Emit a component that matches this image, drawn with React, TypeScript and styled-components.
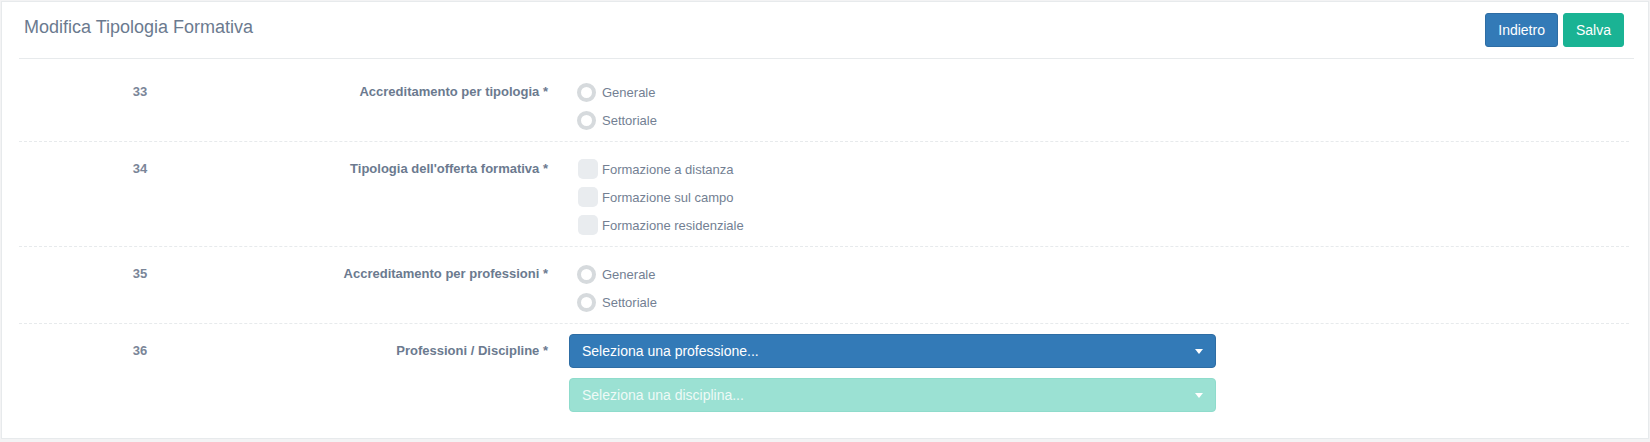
import React from "react";
import styled, { createGlobalStyle } from "styled-components";

const GlobalStyle = createGlobalStyle`
  html, body {
    margin: 0;
    padding: 0;
    background: #f3f3f4;
  }
  body {
    font-family: "Liberation Sans", Arial, sans-serif;
  }
  * { box-sizing: border-box; }
`;

const Page = styled.div`
  padding: 1px 1px 3px 1px;
`;

const Panel = styled.div`
  background: #fff;
  border: 1px solid #e7eaec;
  padding: 0 14px 0 17px;
`;

const Header = styled.div`
  display: flex;
  justify-content: space-between;
  align-items: flex-start;
  padding: 11px 10px 11px 5px;
  border-bottom: 1px solid #e7eaec;
`;

const Title = styled.h5`
  margin: 4px 0 0 0;
  font-size: 18px;
  line-height: 20px;
  font-weight: 400;
  color: #6b7a8f;
`;

const ButtonGroup = styled.div`
  display: flex;
  gap: 5px;
`;

const Button = styled.button<{ $variant: "primary" | "success" }>`
  font-family: inherit;
  font-size: 14px;
  line-height: 20px;
  padding: 6px 12px;
  border-radius: 3px;
  border: 1px solid
    ${(p) => (p.$variant === "primary" ? "#2e6da4" : "#1ab394")};
  background: ${(p) => (p.$variant === "primary" ? "#337ab7" : "#1ab394")};
  color: #fff;
  cursor: pointer;
`;

const Form = styled.div`
  margin: 6px 5px 0 0;
`;

const Row = styled.div<{ $last?: boolean }>`
  display: grid;
  grid-template-columns: 242px 302px 1fr;
  padding: ${(p) => (p.$last ? "10px 0 26px" : "13px 0 7px")};
  border-bottom: ${(p) => (p.$last ? "none" : "1px dashed #e7eaec")};
`;

const NumberCell = styled.div<{ $lh: number }>`
  text-align: center;
  font-size: 13px;
  font-weight: 700;
  line-height: ${(p) => p.$lh}px;
  color: #7a8598;
`;

const LabelCell = styled.label<{ $lh: number }>`
  text-align: right;
  padding-right: 15px;
  font-size: 13px;
  font-weight: 700;
  line-height: ${(p) => p.$lh}px;
  color: #6b7a8f;
`;

const Options = styled.div`
  display: flex;
  flex-direction: column;
  padding-left: 14px;
`;

const Option = styled.div<{ $gap: number }>`
  display: flex;
  align-items: center;
  height: 28px;
  gap: ${(p) => p.$gap}px;
  font-size: 13px;
  color: #737f93;
`;

const RadioMark = styled.span`
  width: 19px;
  height: 19px;
  border-radius: 50%;
  border: 4px solid #d6dadd;
  background: #fff;
`;

const CheckMark = styled.span`
  width: 20px;
  height: 20px;
  margin-left: 1px;
  border-radius: 5px;
  background: #e9ecef;
`;

const Selects = styled.div`
  display: flex;
  flex-direction: column;
  gap: 10px;
  padding-left: 6px;
`;

const SelectBox = styled.div<{ $variant: "primary" | "disabled" }>`
  width: 647px;
  height: 34px;
  display: flex;
  align-items: center;
  justify-content: space-between;
  padding: 0 12px 0 12px;
  border-radius: 4px;
  border: 1px solid
    ${(p) => (p.$variant === "primary" ? "#2e6da4" : "#8fdccc")};
  background: ${(p) => (p.$variant === "primary" ? "#337ab7" : "#9be1d3")};
  color: ${(p) => (p.$variant === "primary" ? "#ffffff" : "#eefaf7")};
  font-size: 14px;
`;

const Caret = styled.span`
  width: 0;
  height: 0;
  border-left: 4px solid transparent;
  border-right: 4px solid transparent;
  border-top: 5px solid #fff;
`;

type OptRow = {
  n: number;
  label: string;
  kind: "radio" | "check";
  options: string[];
};

const rows: OptRow[] = [
  { n: 33, label: "Accreditamento per tipologia *", kind: "radio", options: ["Generale", "Settoriale"] },
  {
    n: 34,
    label: "Tipologia dell'offerta formativa *",
    kind: "check",
    options: ["Formazione a distanza", "Formazione sul campo", "Formazione residenziale"],
  },
  { n: 35, label: "Accreditamento per professioni *", kind: "radio", options: ["Generale", "Settoriale"] },
];

export default function App() {
  return (
    <>
      <GlobalStyle />
      <Page>
        <Panel>
          <Header>
            <Title>Modifica Tipologia Formativa</Title>
            <ButtonGroup>
              <Button $variant="primary">Indietro</Button>
              <Button $variant="success">Salva</Button>
            </ButtonGroup>
          </Header>
          <Form>
            {rows.map((r) => (
              <Row key={r.n}>
                <NumberCell $lh={28}>{r.n}</NumberCell>
                <LabelCell $lh={28}>{r.label}</LabelCell>
                <Options>
                  {r.options.map((o) => (
                    <Option key={o} $gap={r.kind === "radio" ? 6 : 4}>
                      {r.kind === "radio" ? <RadioMark /> : <CheckMark />}
                      <span>{o}</span>
                    </Option>
                  ))}
                </Options>
              </Row>
            ))}
            <Row $last>
              <NumberCell $lh={34}>36</NumberCell>
              <LabelCell $lh={34}>Professioni / Discipline *</LabelCell>
              <Selects>
                <SelectBox $variant="primary">
                  <span>Seleziona una professione...</span>
                  <Caret />
                </SelectBox>
                <SelectBox $variant="disabled">
                  <span>Seleziona una disciplina...</span>
                  <Caret />
                </SelectBox>
              </Selects>
            </Row>
          </Form>
        </Panel>
      </Page>
    </>
  );
}
